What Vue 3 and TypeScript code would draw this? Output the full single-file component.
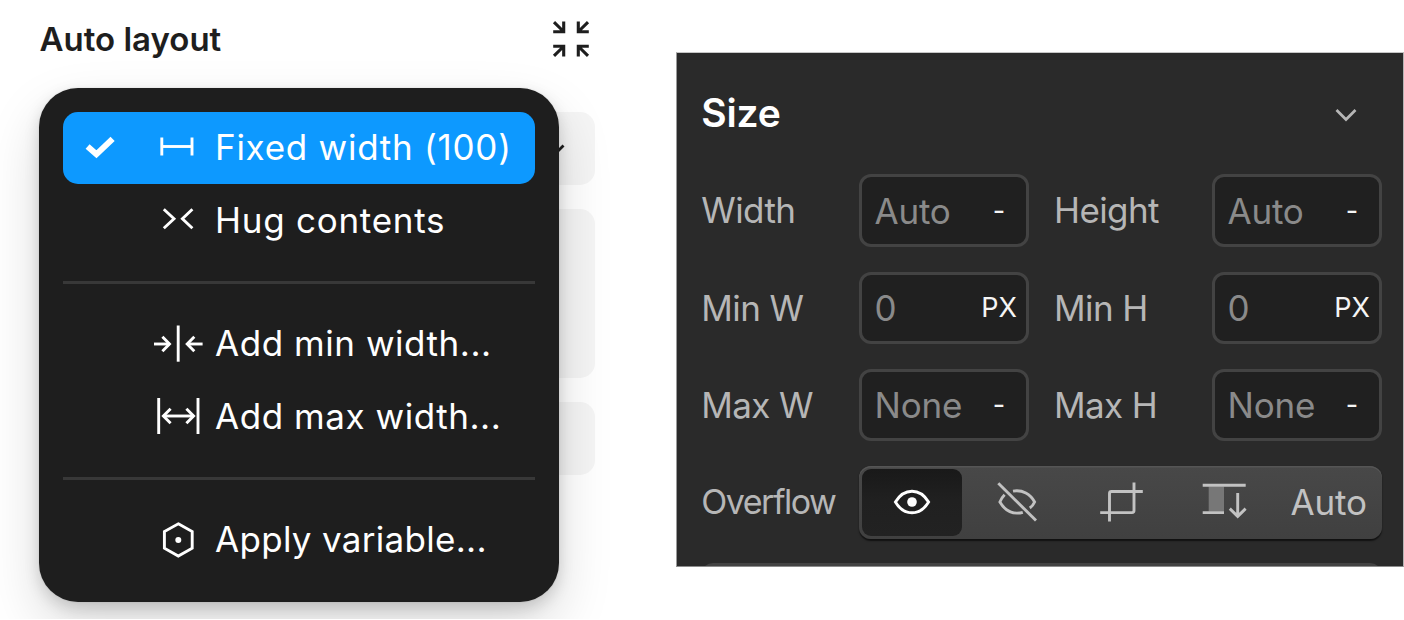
<script setup lang="ts">
import { ref } from 'vue'

interface MenuItem {
  id: string
  label: string
  paths: string[]
  dot?: boolean
}

interface SizeField {
  label: string
  placeholder: string
  unit: string
}

const groups: MenuItem[][] = [
  [
    {
      id: 'fixed',
      label: 'Fixed width (100)',
      paths: ['M7.8 13.5V31.5', 'M38 13.5V31.5', 'M7.8 22.5H38'],
    },
    {
      id: 'hug',
      label: 'Hug contents',
      paths: ['M9.8 13.2L20 22.7L9.8 32.2', 'M38.4 13.2L28.4 22.7L38.4 32.2'],
    },
  ],
  [
    {
      id: 'min',
      label: 'Add min width...',
      paths: ['M24.2 5.5V41.7', 'M0 24H15.5', 'M8.4 16.8L15.5 24L8.4 31.2', 'M48.6 24H33', 'M40.3 16.8L33.2 24L40.3 31.2'],
    },
    {
      id: 'max',
      label: 'Add max width...',
      paths: ['M4.7 6V42', 'M44 6V42', 'M9 24H40', 'M16.6 16.8L9.4 24L16.6 31.2', 'M32.4 16.8L39.6 24L32.4 31.2'],
    },
  ],
  [
    {
      id: 'variable',
      label: 'Apply variable...',
      paths: ['M24.3 7.8L38.2 15.6V32.2L24.3 40L10.4 32.2V15.6Z'],
      dot: true,
    },
  ],
]

const fields: SizeField[] = [
  { label: 'Width', placeholder: 'Auto', unit: '-' },
  { label: 'Height', placeholder: 'Auto', unit: '-' },
  { label: 'Min W', placeholder: '0', unit: 'PX' },
  { label: 'Min H', placeholder: '0', unit: 'PX' },
  { label: 'Max W', placeholder: 'None', unit: '-' },
  { label: 'Max H', placeholder: 'None', unit: '-' },
]

const overflowModes = ['visible', 'hidden', 'clip', 'scroll', 'auto']

const sizing = ref('fixed')
const overflow = ref('visible')
</script>

<template>
  <main class="stage">
    <section class="layout">
      <header class="layout__head">
        <h2 class="layout__title">Auto layout</h2>
        <svg class="layout__collapse" viewBox="0 0 36 36" aria-hidden="true">
          <path d="M1 1.2L10 10M10.7 0.4V10.7H0.2" />
          <path d="M35 1.2L26 10M25.3 0.4V10.7H35.8" />
          <path d="M1 34.8L10 26M10.7 35.6V25.3H0.2" />
          <path d="M35 34.8L26 26M25.3 35.6V25.3H35.8" />
        </svg>
      </header>

      <div class="layout__body">
        <div class="slot slot--select">
          <svg class="slot__chevron" viewBox="0 0 20 12" aria-hidden="true">
            <path d="M1.5 1.5L10 10L18.5 1.5" />
          </svg>
        </div>
        <div class="slot slot--tall" />
        <div class="slot" />

        <div class="menu">
          <ul v-for="(group, g) in groups" :key="g" class="menu__group">
            <li
              v-for="item in group"
              :key="item.id"
              class="menu__item"
              :class="[`menu__item--${item.id}`, { 'menu__item--on': item.id === sizing }]"
              @click="sizing = item.id"
            >
              <svg class="menu__check" viewBox="0 0 32 32" aria-hidden="true">
                <path v-if="item.id === sizing" d="M3.6 14.6L12.4 22.3L28.6 6.8" />
              </svg>
              <svg class="menu__icon" viewBox="0 0 48 48" aria-hidden="true">
                <path v-for="d in item.paths" :key="d" :d="d" />
                <circle v-if="item.dot" cx="24.3" cy="24" r="3" />
              </svg>
              <span class="menu__label">{{ item.label }}</span>
            </li>
          </ul>
        </div>
      </div>
    </section>

    <section class="panel">
      <header class="panel__head">
        <h2 class="panel__title">Size</h2>
        <svg class="panel__chevron" viewBox="0 0 24 14" aria-hidden="true">
          <path d="M2.5 2L12 11.5L21.5 2" />
        </svg>
      </header>

      <div class="panel__grid">
        <template v-for="field in fields" :key="field.label">
          <span class="panel__label">{{ field.label }}</span>
          <div class="input">
            <span class="input__value">{{ field.placeholder }}</span>
            <span class="input__unit">{{ field.unit }}</span>
          </div>
        </template>

        <span class="panel__label panel__label--tight">Overflow</span>
        <div class="segments">
          <button
            v-for="mode in overflowModes"
            :key="mode"
            type="button"
            class="segment"
            :class="{ 'segment--on': mode === overflow }"
            @click="overflow = mode"
          >
            <svg v-if="mode === 'visible'" class="segment__icon" viewBox="0 0 48 48">
              <path d="M7.4 24C12 16.4 17.5 13.2 24 13.2S36 16.4 40.6 24C36 31.6 30.5 34.8 24 34.8S12 31.6 7.4 24Z" />
              <circle cx="24" cy="24" r="4.8" />
            </svg>
            <svg v-else-if="mode === 'hidden'" class="segment__icon" viewBox="-1 0 48 48">
              <path d="M5.3 5.3L43 42.5" />
              <path d="M11.6 16.8C9.8 18.6 8.2 21 6.9 24C11 31 17 35.1 24 35.1C26 35.1 28 34.9 29.8 34.3" />
              <path d="M20 13.1C29.5 11.5 37.5 16 41.6 24C40.6 26.3 39 28.4 36.8 30" />
            </svg>
            <svg v-else-if="mode === 'clip'" class="segment__icon" viewBox="-1.5 0 48 48">
              <path d="M12 43.6V15.5A2 2 0 0 1 14 13.5H45.3" />
              <path d="M2.7 34.6H34.5A2 2 0 0 0 36.5 32.6V4.6" />
            </svg>
            <svg v-else-if="mode === 'scroll'" class="segment__icon" viewBox="1 0 48 48">
              <rect class="segment__shade" x="8.7" y="8.5" width="15.3" height="25" />
              <path d="M2.7 7.3H45.7M2.7 34.6H24M37.7 15V38.4M29.8 30.6L37.7 38.4L45.6 30.6" />
            </svg>
            <span v-else class="segment__text">Auto</span>
          </button>
        </div>

        <div class="panel__next" />
      </div>
    </section>
  </main>
</template>

<style>
body {
  margin: 0;
  background: #fff;
}
</style>

<style scoped>
.stage {
  display: flex;
  align-items: flex-start;
  width: 1404px;
  height: 620px;
  overflow: hidden;
  font-family: Inter, 'Liberation Sans', sans-serif;
  background: #fff;
}

h2,
ul {
  margin: 0;
  padding: 0;
}

svg {
  flex: none;
  overflow: visible;
  fill: none;
}

/* auto layout */
.layout {
  box-sizing: border-box;
  flex: none;
  width: 676px;
  height: 619px;
  padding: 16px 81px 0 39px;
  overflow: hidden;
}

.layout__head {
  display: flex;
  align-items: center;
  justify-content: space-between;
  height: 46.5px;
  padding-right: 6px;
}

.layout__title {
  padding-left: 0.5px;
  color: #1e1e1e;
  font-size: 33px;
  font-weight: 600;
  line-height: 47px;
}

.layout__collapse {
  width: 36px;
  height: 36px;
  stroke: #1e1e1e;
  stroke-width: 3.1;
}

.layout__body {
  position: relative;
  display: flex;
  flex-direction: column;
  gap: 24px;
  padding-top: 49.5px;
}

.slot {
  height: 72.5px;
  border-radius: 15px;
  background: #f5f5f5;
}

.slot--select {
  box-sizing: border-box;
  display: flex;
  align-items: center;
  justify-content: flex-end;
  padding: 3px 30px 0 0;
}

.slot--tall {
  height: 169.5px;
}

.slot__chevron {
  width: 20px;
  height: 12px;
  stroke: #1e1e1e;
  stroke-width: 2.8;
}

.menu {
  position: absolute;
  top: 25px;
  left: 0.3px;
  box-sizing: border-box;
  width: 519.7px;
  height: 514px;
  padding: 24px;
  border-radius: 39px;
  background: #1e1e1e;
  box-shadow:
    0 0 1.5px rgba(0, 0, 0, 0.15),
    0 6px 15px rgba(0, 0, 0, 0.15),
    0 24px 54px rgba(0, 0, 0, 0.15);
}

.menu__group {
  list-style: none;
}

.menu__group + .menu__group {
  margin-top: 24px;
  padding-top: 24px;
  border-top: 3px solid #383838;
}

.menu__item {
  display: flex;
  align-items: center;
  height: 72.5px;
  padding-left: 20.5px;
  border-radius: 15px;
  color: #fff;
  letter-spacing: 0.55px;
}

.menu__item--fixed,
.menu__item--hug {
  letter-spacing: 0.74px;
}

.menu__item--variable {
  letter-spacing: 0.3px;
}

.menu__item--on {
  background: #0d99ff;
}

.menu__check {
  width: 32px;
  height: 32px;
  stroke: #fff;
  stroke-width: 6;
}

.menu__icon {
  width: 48px;
  height: 48px;
  margin: 0 12.5px 0 38.2px;
  stroke: #fff;
  stroke-width: 2.9;
}

.menu__icon circle {
  fill: #fff;
  stroke: none;
}

.menu__label {
  padding: 0 0 1px 0.5px;
  font-size: 35px;
  line-height: 70px;
  white-space: nowrap;
}

/* size panel */
.panel {
  box-sizing: border-box;
  flex: none;
  width: 728px;
  height: 515px;
  margin-top: 52px;
  padding: 0 21px 0 24.3px;
  border: 1px solid;
  border-color: #c6c6c6 #b4b4b4 #8c8c8c #9a9a9a;
  background: #2a2a2a;
  overflow: hidden;
}

.panel__head {
  display: flex;
  align-items: center;
  justify-content: space-between;
  height: 121.3px;
  padding-right: 24.5px;
}

.panel__title {
  padding-bottom: 1.5px;
  color: #fff;
  font-size: 39px;
  font-weight: 600;
  letter-spacing: -0.2px;
}

.panel__chevron {
  width: 24px;
  height: 14px;
  margin-top: 2px;
  stroke: #b6b6b6;
  stroke-width: 2.7;
}

.panel__grid {
  display: grid;
  grid-template-columns: 157.7px 170px 183px 170px;
  row-gap: 24.8px;
}

.panel__label {
  color: #b6b6b6;
  font-size: 35px;
  letter-spacing: -0.6px;
  line-height: 72px;
  white-space: nowrap;
}

.panel__label:nth-child(4n + 3) {
  padding-left: 25px;
}

.panel__grid > .panel__label--tight {
  padding-left: 0;
  font-size: 34px;
  letter-spacing: -1.5px;
}

.input {
  box-sizing: border-box;
  display: flex;
  align-items: center;
  justify-content: space-between;
  height: 72.5px;
  padding-left: 12.5px;
  border: 3px solid #434343;
  border-radius: 12px;
  background: #202020;
}

.input__value {
  color: #8a8a8a;
  font-size: 35px;
  letter-spacing: -0.2px;
}

.input__unit {
  width: 54px;
  color: #f5f5f5;
  font-size: 27px;
  line-height: 40px;
  text-align: center;
}

.segments {
  grid-column: 2 / -1;
  box-sizing: border-box;
  display: grid;
  grid-template-columns: repeat(5, 1fr);
  height: 72.5px;
  border-radius: 12px;
  background: linear-gradient(#484848, #404040);
  box-shadow:
    inset 0 1.5px 0 #555,
    0 1.5px 1.5px rgba(0, 0, 0, 0.6);
}

.segment {
  display: flex;
  align-items: center;
  justify-content: center;
  padding: 0;
  border: 0;
  background: none;
  color: #c2c2c2;
  font-family: inherit;
}

.segment--on {
  margin: 3px 1.5px 3px 3px;
  border-radius: 9px;
  background: linear-gradient(#191919, #202020 45%, #222);
  color: #fff;
}

.segment__icon {
  width: 48px;
  height: 48px;
  stroke: currentColor;
  stroke-width: 2.9;
}

.segment__icon circle {
  fill: currentColor;
  stroke: none;
}

.segment__icon .segment__shade {
  fill: #777;
  stroke: none;
}

.segment__text {
  padding-right: 2px;
  font-size: 35px;
  letter-spacing: -0.2px;
}

.panel__next {
  grid-column: 1 / -1;
  height: 72px;
  border-radius: 12px;
  background: #434343;
}
</style>
